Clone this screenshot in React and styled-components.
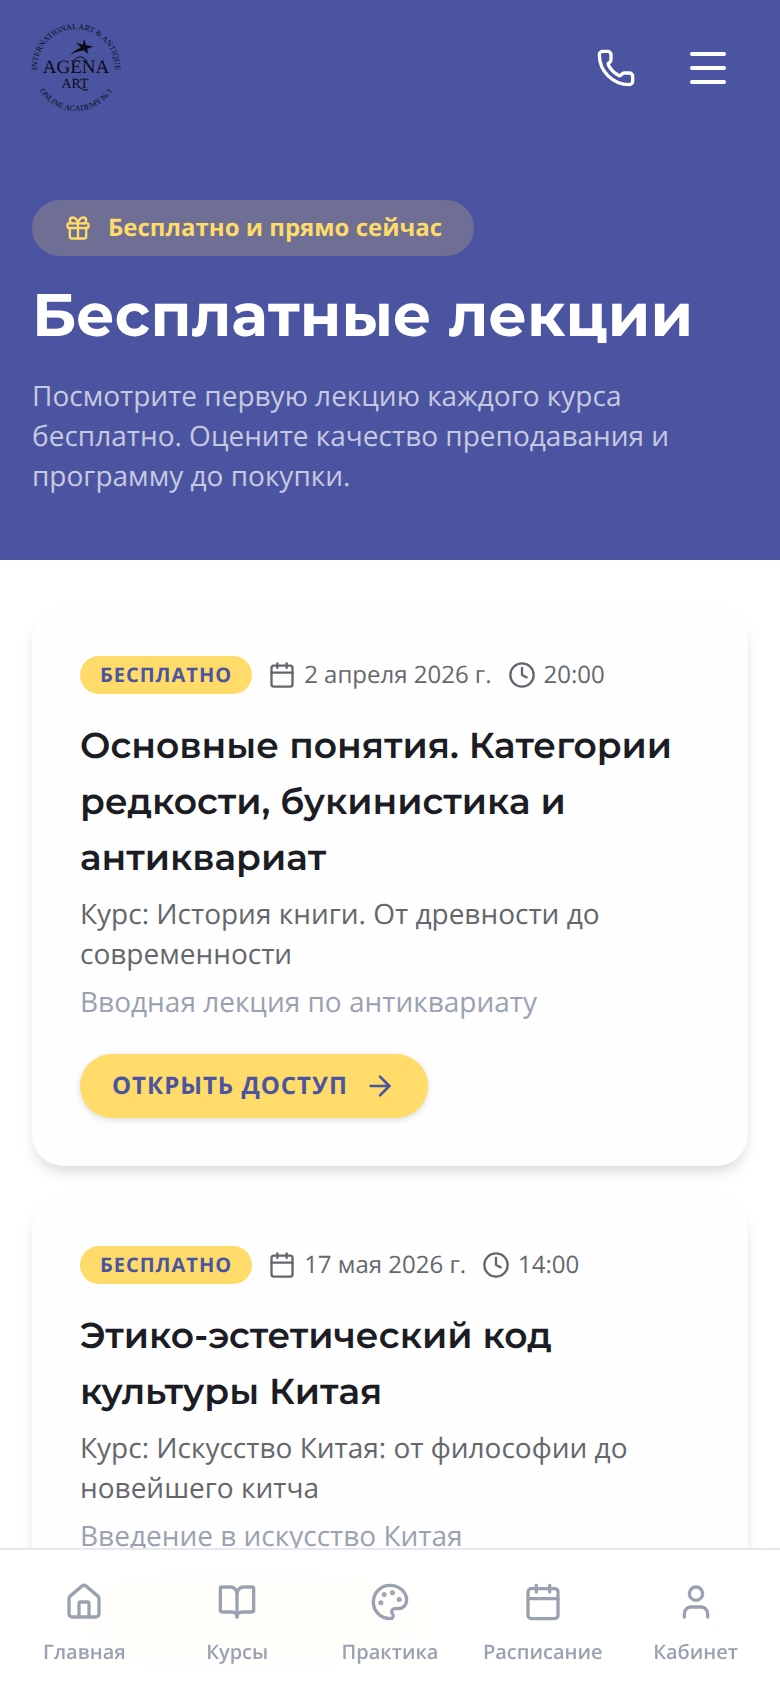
import React from "react";
import styled, { ThemeProvider, createGlobalStyle } from "styled-components";
import {
  ArrowRight,
  BookOpen,
  Calendar,
  Clock,
  Gift,
  House,
  Palette,
  Phone,
  User,
} from "lucide-react";

const theme = {
  primary: "#4b54a0",
  accent: "#ffdb69",
  textColor: "#1c1c24",
  textSecondary: "#63676d",
  textMuted: "#9aa2b1",
  border: "#e6e7f0",
  bodyFont: `"Open Sans", "Noto Sans", sans-serif`,
  titleFont: `"Montserrat", "Inter", sans-serif`,
};

const GlobalStyle = createGlobalStyle`
  *, *::before, *::after {
    box-sizing: border-box;
  }
  body {
    margin: 0;
    background: #fff;
    color: ${theme.textColor};
    font-family: ${theme.bodyFont};
    text-rendering: geometricPrecision;
  }
  h1, h2, p {
    margin: 0;
  }
  a {
    color: inherit;
    text-decoration: none;
  }
  button {
    text-rendering: inherit;
  }
`;

const HeaderBox = styled.header`
  display: flex;
  align-items: center;
  justify-content: space-between;
  padding: 24px 32px;
  background: ${({ theme }) => theme.primary};
`;

const LogoLink = styled.a`
  display: block;
  width: 88px;
  height: 88px;
  svg {
    display: block;
    overflow: visible;
  }
`;

const HeaderActions = styled.div`
  display: flex;
  gap: 12px;
`;

const IconButton = styled.button`
  display: flex;
  align-items: center;
  justify-content: center;
  width: 80px;
  height: 80px;
  padding: 0;
  border: 0;
  background: none;
  color: #fff;
  cursor: pointer;
`;

const Burger = styled.span`
  display: flex;
  flex-direction: column;
  gap: 10px;
  width: 36px;
`;

const BurgerLine = styled.span`
  height: 4px;
  border-radius: 2px;
  background: currentColor;
`;

const Hero = styled.section`
  padding: 64px 32px;
  background: ${({ theme }) => theme.primary};
`;

const HeroBadge = styled.div`
  display: inline-flex;
  align-items: center;
  gap: 16px;
  height: 56px;
  padding: 0 32px;
  border-radius: 28px;
  background: rgba(255, 219, 105, 0.2);
  color: ${({ theme }) => theme.accent};
  font-size: 24px;
  font-weight: 700;
  line-height: 32px;
  vertical-align: top;
`;

const HeroTitle = styled.h1`
  margin: 24px 0;
  color: #fff;
  font-family: ${({ theme }) => theme.titleFont};
  font-size: 60px;
  font-weight: 700;
  line-height: 72px;
`;

const HeroText = styled.p`
  color: rgba(255, 255, 255, 0.7);
  font-size: 28px;
  line-height: 40px;
`;

const LectureList = styled.main`
  display: flex;
  flex-direction: column;
  gap: 32px;
  padding: 48px 32px 188px;
`;

const Card = styled.article`
  padding: 48px;
  border-radius: 32px;
  background: #fefefe;
  box-shadow: 0 8px 12px -2px rgba(0, 0, 0, 0.1),
    0 8px 24px -4px rgba(0, 0, 0, 0.05);
`;

const CardMeta = styled.div`
  display: flex;
  flex-wrap: wrap;
  align-items: center;
  gap: 16px;
  margin-bottom: 24px;
`;

const FreeTag = styled.span`
  padding: 0 20px;
  border-radius: 20px;
  background: ${({ theme }) => theme.accent};
  color: ${({ theme }) => theme.primary};
  font-size: 20px;
  font-weight: 700;
  letter-spacing: 1px;
  line-height: 38px;
  text-transform: uppercase;
`;

const MetaItem = styled.span`
  display: flex;
  align-items: center;
  gap: 8px;
  color: ${({ theme }) => theme.textSecondary};
  font-size: 24px;
  line-height: 38px;
`;

const CardTitle = styled.h2`
  font-family: ${({ theme }) => theme.titleFont};
  font-size: 36px;
  font-weight: 600;
  line-height: 56px;
`;

const CardText = styled.p`
  margin-top: 8px;
  color: ${({ theme, $muted }) => ($muted ? theme.textMuted : theme.textSecondary)};
  font-size: 28px;
  line-height: 40px;
`;

const AccessButton = styled.button`
  display: inline-flex;
  align-items: center;
  gap: 16px;
  height: 64px;
  margin-top: 32px;
  padding: 0 32px;
  border: 0;
  border-radius: 32px;
  background: ${({ theme }) => theme.accent};
  box-shadow: 0 2px 6px rgba(0, 0, 0, 0.14);
  color: ${({ theme }) => theme.primary};
  font-family: inherit;
  font-size: 24px;
  font-weight: 700;
  letter-spacing: 1px;
  line-height: 32px;
  text-transform: uppercase;
  vertical-align: top;
  cursor: pointer;
`;

const BottomNav = styled.nav`
  position: fixed;
  right: 0;
  bottom: 0;
  left: 0;
  display: grid;
  grid-template-columns: repeat(5, 1fr);
  padding: 32px 8px 22px;
  border-top: 2px solid ${({ theme }) => theme.border};
  background: rgba(255, 255, 255, 0.95);
  backdrop-filter: blur(40px);
`;

const NavLink = styled.a`
  display: flex;
  flex-direction: column;
  align-items: center;
  gap: 16px;
  && {
    color: ${({ theme }) => theme.textMuted};
  }
  font-size: 20px;
  font-weight: 600;
  line-height: 28px;
`;

const Logo = () => (
  <svg
    width="88"
    height="88"
    viewBox="0 0 88 88"
    fill="#0b0c16"
    fontFamily="'Liberation Serif', serif"
    role="img"
    aria-label="Agena Art"
  >
    <defs>
      <path id="logo-top" d="M5.600 51 A39 39 0 1 1 82.400 51" />
      <path id="logo-bottom" d="M2.200 54 A43 43 0 0 0 85.800 54" />
    </defs>
    <text fontSize="8">
      <textPath href="#logo-top" startOffset="50%" textAnchor="middle">
        INTERNATIONAL ART &amp; ANTIQUE
      </textPath>
    </text>
    <text fontSize="8">
      <textPath href="#logo-bottom" startOffset="50%" textAnchor="middle">
        ONLINE ACADEMY № 1
      </textPath>
    </text>
    <path d="M52.300 15l1.600 6 7.300 1.500-6 2.500 1 5-4.300-3.700q-7 .5-14 4.500 5-5 11-7.200l-5-5.200 6.800 2.400z" />
    <path
      d="M42 36q5-4.500 9-2.500 2.500 1.500 4 4"
      fill="none"
      stroke="#0b0c16"
      strokeWidth="1"
    />
    <text x="44" y="49" fontSize="19" textAnchor="middle">
      AGENA
    </text>
    <text x="43" y="64" fontSize="14" textAnchor="middle">
      ART
    </text>
    <path
      d="M47 63q4 4 9 3"
      fill="none"
      stroke="#0b0c16"
      strokeWidth="1"
    />
  </svg>
);

const lectures = [
  {
    id: 1,
    date: "2 апреля 2026 г.",
    time: "20:00",
    title: "Основные понятия. Категории редкости, букинистика и антиквариат",
    course: "История книги. От древности до современности",
    description: "Вводная лекция по антиквариату",
  },
  {
    id: 2,
    date: "17 мая 2026 г.",
    time: "14:00",
    title: "Этико-эстетический код культуры Китая",
    course: "Искусство Китая: от философии до новейшего китча",
    description: "Введение в искусство Китая",
  },
];

const navItems = [
  { label: "Главная", icon: House },
  { label: "Курсы", icon: BookOpen },
  { label: "Практика", icon: Palette },
  { label: "Расписание", icon: Calendar },
  { label: "Кабинет", icon: User },
];

const Header = () => (
  <HeaderBox>
    <LogoLink href="#">
      <Logo />
    </LogoLink>
    <HeaderActions>
      <IconButton type="button" aria-label="Позвонить">
        <Phone size={40} />
      </IconButton>
      <IconButton type="button" aria-label="Меню">
        <Burger>
          <BurgerLine />
          <BurgerLine />
          <BurgerLine />
        </Burger>
      </IconButton>
    </HeaderActions>
  </HeaderBox>
);

const LectureCard = ({ lecture }) => (
  <Card>
    <CardMeta>
      <FreeTag>Бесплатно</FreeTag>
      <MetaItem>
        <Calendar size={28} />
        {lecture.date}
      </MetaItem>
      <MetaItem>
        <Clock size={28} />
        {lecture.time}
      </MetaItem>
    </CardMeta>
    <CardTitle>{lecture.title}</CardTitle>
    <CardText>Курс: {lecture.course}</CardText>
    <CardText $muted>{lecture.description}</CardText>
    <AccessButton type="button">
      Открыть доступ
      <ArrowRight size={32} />
    </AccessButton>
  </Card>
);

const App = () => {
  return (
    <ThemeProvider theme={theme}>
      <GlobalStyle />
      <Header />
      <Hero>
        <HeroBadge>
          <Gift size={28} />
          Бесплатно и прямо сейчас
        </HeroBadge>
        <HeroTitle>Бесплатные лекции</HeroTitle>
        <HeroText>
          Посмотрите первую лекцию каждого курса бесплатно. Оцените качество
          преподавания и программу до покупки.
        </HeroText>
      </Hero>
      <LectureList>
        {lectures.map((lecture) => (
          <LectureCard key={lecture.id} lecture={lecture} />
        ))}
      </LectureList>
      <BottomNav>
        {navItems.map(({ label, icon: Icon }) => (
          <NavLink key={label} href="#">
            <Icon size={40} />
            {label}
          </NavLink>
        ))}
      </BottomNav>
    </ThemeProvider>
  );
};

export default App;
